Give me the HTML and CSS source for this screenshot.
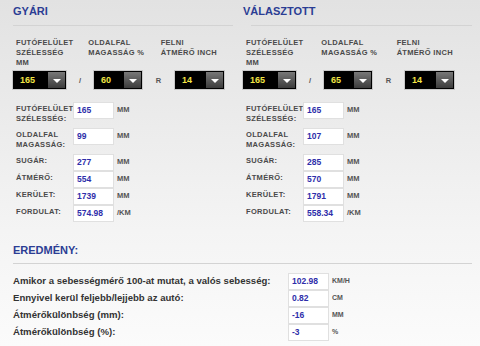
FILE: index.html
```html
<!DOCTYPE html>
<html lang="hu">
<head>
    <meta charset="UTF-8">
    <title>Gumiméret kalkulátor</title>
    <link rel="stylesheet" href="styles.css">
</head>
<body>
    <div class="panels">
        <div class="panel">
            <h2 class="title">GYÁRI</h2>
            <div class="rule"></div>
            <div class="size-labels">
                <div>FUTÓFELÜLET<br>SZÉLESSÉG<br>MM</div>
                <div>OLDALFAL<br>MAGASSÁG %</div>
                <div>FELNI<br>ÁTMÉRŐ INCH</div>
            </div>
            <div class="size-selects">
                <div class="sel sel-wide"><span class="sel-value">165</span><span class="sel-arrow"></span></div>
                <span class="sep">/</span>
                <div class="sel"><span class="sel-value">60</span><span class="sel-arrow"></span></div>
                <span class="sep sep-r">R</span>
                <div class="sel sel-rim"><span class="sel-value">14</span><span class="sel-arrow"></span></div>
            </div>
            <div class="data">
                <div class="row row-tall"><div class="row-label">FUTÓFELÜLET<br>SZÉLESSÉG:</div><div class="box">165</div><div class="row-unit">MM</div></div>
                <div class="row row-tall"><div class="row-label">OLDALFAL<br>MAGASSÁG:</div><div class="box">99</div><div class="row-unit">MM</div></div>
                <div class="row"><div class="row-label">SUGÁR:</div><div class="box">277</div><div class="row-unit">MM</div></div>
                <div class="row"><div class="row-label">ÁTMÉRŐ:</div><div class="box">554</div><div class="row-unit">MM</div></div>
                <div class="row"><div class="row-label">KERÜLET:</div><div class="box">1739</div><div class="row-unit">MM</div></div>
                <div class="row"><div class="row-label">FORDULAT:</div><div class="box">574.98</div><div class="row-unit">/KM</div></div>
            </div>
        </div>

        <div class="panel panel-right">
            <h2 class="title">VÁLASZTOTT</h2>
            <div class="rule"></div>
            <div class="size-labels">
                <div>FUTÓFELÜLET<br>SZÉLESSÉG<br>MM</div>
                <div>OLDALFAL<br>MAGASSÁG %</div>
                <div>FELNI<br>ÁTMÉRŐ INCH</div>
            </div>
            <div class="size-selects">
                <div class="sel sel-wide"><span class="sel-value">165</span><span class="sel-arrow"></span></div>
                <span class="sep">/</span>
                <div class="sel"><span class="sel-value">65</span><span class="sel-arrow"></span></div>
                <span class="sep sep-r">R</span>
                <div class="sel sel-rim"><span class="sel-value">14</span><span class="sel-arrow"></span></div>
            </div>
            <div class="data">
                <div class="row row-tall"><div class="row-label">FUTÓFELÜLET<br>SZÉLESSÉG:</div><div class="box">165</div><div class="row-unit">MM</div></div>
                <div class="row row-tall"><div class="row-label">OLDALFAL<br>MAGASSÁG:</div><div class="box">107</div><div class="row-unit">MM</div></div>
                <div class="row"><div class="row-label">SUGÁR:</div><div class="box">285</div><div class="row-unit">MM</div></div>
                <div class="row"><div class="row-label">ÁTMÉRŐ:</div><div class="box">570</div><div class="row-unit">MM</div></div>
                <div class="row"><div class="row-label">KERÜLET:</div><div class="box">1791</div><div class="row-unit">MM</div></div>
                <div class="row"><div class="row-label">FORDULAT:</div><div class="box">558.34</div><div class="row-unit">/KM</div></div>
            </div>
        </div>
    </div>

    <div class="result">
        <h2 class="title">EREDMÉNY:</h2>
        <div class="rule"></div>
        <div class="result-rows">
            <div class="res-row"><div class="res-label">Amikor a sebességmérő 100-at mutat, a valós sebesség:</div><div class="box">102.98</div><div class="res-unit">KM/H</div></div>
            <div class="res-row"><div class="res-label">Ennyivel kerül feljebb/lejjebb az autó:</div><div class="box">0.82</div><div class="res-unit">CM</div></div>
            <div class="res-row"><div class="res-label">Átmérőkülönbség (mm):</div><div class="box">-16</div><div class="res-unit">MM</div></div>
            <div class="res-row"><div class="res-label">Átmérőkülönbség (%):</div><div class="box">-3</div><div class="res-unit">%</div></div>
        </div>
    </div>
</body>
</html>
```

FILE: styles.css
```css
html {
    background: #fbfbfb;
}
body {
    margin: 0;
    width: 480px;
    height: 346px;
    font-family: "Liberation Sans", Arial, sans-serif;
    background: linear-gradient(#e2e2e2, #f4f4f4 230px, #fbfbfb);
}
.panels {
    display: flex;
}
.panel {
    width: 240px;
    box-sizing: border-box;
    padding: 4px 7px 0 13px;
}
.panel-right {
    padding: 4px 8px 0 3px;
}
.panel-right .rule {
    margin-left: 8px;
}
.title {
    margin: 0;
    font-size: 11px;
    line-height: 14px;
    font-weight: bold;
    color: #2b3d94;
}
.rule {
    border-top: 1px solid #d3d3d3;
    margin-top: 7px;
}

/* meret valasztok */
.size-labels {
    display: flex;
    height: 30px;
    margin-top: 12px;
    padding-left: 3px;
}
.size-labels div {
    width: 76px;
    font-size: 7.5px;
    line-height: 10px;
    letter-spacing: 0.3px;
    font-weight: bold;
    color: #4a4a4a;
}
.size-selects {
    display: flex;
    align-items: center;
    margin-top: 2px;
    margin-left: -1px;
}
.sel {
    display: flex;
    justify-content: space-between;
    width: 50px;
    height: 20px;
    box-sizing: border-box;
    border: 1px solid #c8c8c8;
    background: #000;
}
.sel-wide {
    width: 55px;
}
.sel-rim {
    width: 51px;
}
.sel-value {
    padding-left: 7px;
    font-size: 9px;
    line-height: 18px;
    font-weight: bold;
    color: #f2e544;
}
.sel-arrow {
    display: flex;
    align-items: center;
    justify-content: center;
    width: 17px;
    margin: 1px;
    background: linear-gradient(#787878, #3c3c3c);
}
.sel-arrow::after {
    content: "";
    margin-top: 1px;
    border-left: 4px solid transparent;
    border-right: 4px solid transparent;
    border-top: 4px solid #fff;
}
.sep {
    width: 26px;
    text-align: center;
    font-size: 7.5px;
    font-weight: bold;
    color: #555;
}
.sep-r {
    width: 31px;
}

/* adatok */
.data {
    margin-top: 12px;
    padding-left: 3px;
}
.row {
    display: flex;
    height: 17px;
}
.row-tall {
    height: 26px;
}
.row-label {
    width: 57px;
    padding-top: 2px;
    font-size: 7.5px;
    line-height: 10px;
    letter-spacing: 0.3px;
    font-weight: bold;
    color: #4a4a4a;
}
.box {
    width: 41px;
    height: 17px;
    box-sizing: border-box;
    padding-left: 3px;
    border: 1px solid #e0e0e0;
    background: #fff;
    font-size: 8.5px;
    line-height: 15px;
    font-weight: bold;
    color: #2e2eaa;
}
.row-unit {
    margin-left: 3px;
    padding-top: 3px;
    font-size: 7.5px;
    line-height: 10px;
    font-weight: bold;
    color: #555;
}

/* eredmeny */
.result {
    margin-top: 21px;
    padding: 0 8px 0 13px;
}
.result .rule {
    margin-top: 6px;
}
.result-rows {
    margin-top: 9px;
}
.res-row {
    display: flex;
    height: 17px;
}
.res-label {
    width: 275px;
    font-size: 9.6px;
    line-height: 15px;
    font-weight: bold;
    color: #333;
}
.res-unit {
    margin-left: 3px;
    padding-top: 3px;
    font-size: 7px;
    line-height: 10px;
    font-weight: bold;
    color: #555;
}
```
